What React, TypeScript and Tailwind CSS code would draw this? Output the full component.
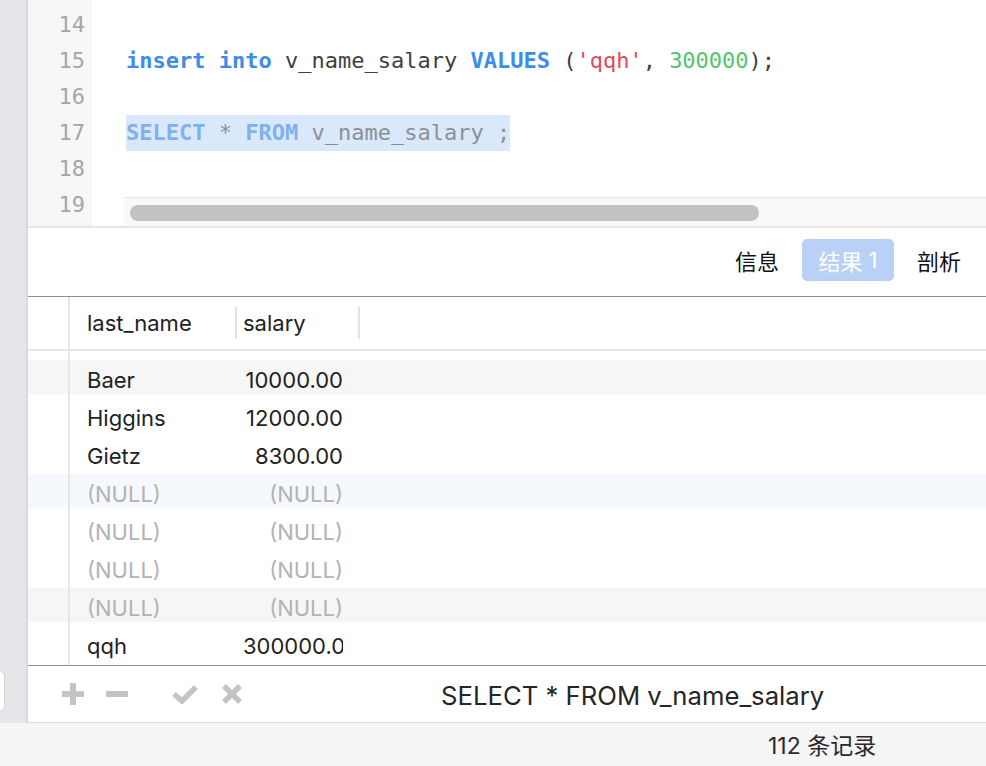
import React from "react";

const mono = { fontFamily: '"DejaVu Sans Mono", "Liberation Mono", monospace' };
const sans = { fontFamily: 'Inter, "Noto Sans CJK SC", sans-serif' };

type Row = { name: string; salary: string; nul?: boolean; band?: string; clip?: boolean };

const rows: Row[] = [
  { name: "Baer", salary: "10000.00", band: "bg-[#f6f6f6]" },
  { name: "Higgins", salary: "12000.00" },
  { name: "Gietz", salary: "8300.00" },
  { name: "(NULL)", salary: "(NULL)", nul: true, band: "bg-[#f5f8fd]" },
  { name: "(NULL)", salary: "(NULL)", nul: true },
  { name: "(NULL)", salary: "(NULL)", nul: true },
  { name: "(NULL)", salary: "(NULL)", nul: true, band: "bg-[#f6f6f6]" },
  { name: "qqh", salary: "300000.00", clip: true },
];

function CodeLine({ children, hl }: { children?: React.ReactNode; hl?: boolean }) {
  return (
    <div className="h-[36px] flex items-center">
      <span className={"whitespace-pre leading-[36px] h-[36px] " + (hl ? "bg-[#dae8fb]" : "")}>{children}</span>
    </div>
  );
}

export default function App() {
  return (
    <div className="w-[986px] h-[766px] flex flex-col bg-white overflow-hidden" style={sans}>
      <div className="flex flex-1 min-h-0">
        {/* left strip */}
        <div className="w-[28px] shrink-0 bg-[#e6e5ea] border-r-2 border-[#d9d8dd] flex flex-col">
          <div className="flex-1" />
          <div className="h-[40px] w-[5px] bg-white rounded-r-[6px] border border-l-0 border-[#d4d4d4] mb-[12px]" />
        </div>
        {/* main */}
        <div className="flex-1 flex flex-col min-w-0">
          {/* editor */}
          <div className="h-[228px] shrink-0 flex border-b-2 border-[#e6e6e6]">
            <div className="w-[64px] shrink-0 bg-[#f7f7f7] pt-[7px] pr-[7px] text-right text-[22px] text-[#a6a6a6] overflow-hidden" style={mono}>
              {[14, 15, 16, 17, 18, 19].map((n) => (
                <div key={n} className="h-[36px] leading-[36px]">{n}</div>
              ))}
            </div>
            <div className="flex-1 flex flex-col min-w-0">
              <div className="flex-1 overflow-hidden pt-[7px] pl-[34px] text-[22px] text-[#404040]" style={mono}>
                <CodeLine />
                <CodeLine>
                  <span className="text-[#3c8de9] font-bold">insert</span> <span className="text-[#3c8de9] font-bold">into</span> v_name_salary{" "}
                  <span className="text-[#3c8de9] font-bold">VALUES</span> (<span className="text-[#e24a5c]">'qqh'</span>,{" "}
                  <span className="text-[#52c36f]">300000</span>);
                </CodeLine>
                <CodeLine />
                <CodeLine hl>
                  <span className="text-[#7fb1ef] font-bold">SELECT</span>
                  <span className="text-[#8a9098]"> * </span>
                  <span className="text-[#7fb1ef] font-bold">FROM</span>
                  <span className="text-[#8a9098]"> v_name_salary ;</span>
                </CodeLine>
              </div>
              <div className="h-[29px] shrink-0 ml-[32px] bg-[#f9f9f9] border-t border-[#e6e6e6] pl-[6px] pt-[7px]">
                <div className="w-[629px] h-[16px] rounded-full bg-[#c2c2c2]" />
              </div>
            </div>
          </div>
          {/* tabs */}
          <div className="h-[69px] shrink-0 border-b border-[#8e8e8e] flex items-center justify-end pr-[25px] pb-[4px] text-[22px] text-[#111]" style={{ fontFamily: '"Noto Sans CJK SC", sans-serif' }}>
            <div className="mr-[23px]">信息</div>
            <div className="h-[42px] w-[92px] rounded-[5px] bg-[#b9d1f7] text-white flex items-center justify-center mr-[23px]">
              结果 <span className="ml-[6px]" style={sans}>1</span>
            </div>
            <div>剖析</div>
          </div>
          {/* grid */}
          <div className="flex-1 min-h-0 flex flex-col text-[22px] text-[#222]">
            <div className="h-[54px] shrink-0 flex border-b-2 border-[#e6e6e6]">
              <div className="w-[42px] shrink-0 border-r-2 border-[#e6e6e6]" />
              <div className="w-[165px] shrink-0 pl-[17px] flex items-center">last_name</div>
              <div className="w-[2px] h-[32px] self-center bg-[#e2e2e2]" />
              <div className="w-[121px] shrink-0 pl-[6px] flex items-center">salary</div>
              <div className="w-[2px] h-[32px] self-center bg-[#e2e2e2]" />
            </div>
            <div className="flex-1 flex flex-col">
              <div className="h-[9px] shrink-0 flex">
                <div className="w-[42px] shrink-0 border-r-2 border-[#e6e6e6]" />
              </div>
              {rows.map((r, i) => (
                <div key={i} className="h-[38px] shrink-0 flex flex-col">
                  <div className={"h-[34px] flex " + (r.band || "")}>
                    <div className="w-[42px] shrink-0 border-r-2 border-[#e6e6e6]" />
                    <div className={"w-[165px] shrink-0 pl-[17px] flex items-center pt-[6px] " + (r.nul ? "text-[#b3b3b3]" : "")}>{r.name}</div>
                    <div className="w-[2px]" />
                    <div
                      className={
                        "w-[100px] shrink-0 ml-[6px] overflow-hidden whitespace-nowrap flex items-center pt-[6px] " +
                        (r.clip ? "justify-start " : "justify-end ") +
                        (r.nul ? "text-[#b3b3b3]" : "")
                      }
                    >
                      {r.salary}
                    </div>
                  </div>
                  <div className="h-[4px] flex">
                    <div className="w-[42px] shrink-0 border-r-2 border-[#e6e6e6]" />
                  </div>
                </div>
              ))}
              <div className="flex-1 flex">
                <div className="w-[42px] shrink-0 border-r-2 border-[#e6e6e6]" />
              </div>
            </div>
          </div>
          {/* toolbar */}
          <div className="h-[58px] shrink-0 border-t border-[#8e8e8e] border-b border-b-[#dcdcdc] flex items-center">
            <svg width="22" height="22" viewBox="0 0 22 22" className="ml-[34px]">
              <rect x="0" y="8" width="22" height="6" fill="#c4c4c4" />
              <rect x="8" y="0" width="6" height="22" fill="#c4c4c4" />
            </svg>
            <svg width="22" height="22" viewBox="0 0 22 22" className="ml-[22px]">
              <rect x="0" y="8" width="22" height="6" fill="#c4c4c4" />
            </svg>
            <svg width="26" height="20" viewBox="0 0 26 20" className="ml-[44px]">
              <path d="M2 10 L10 17 L24 3" fill="none" stroke="#c4c4c4" strokeWidth="5.5" strokeLinecap="butt" strokeLinejoin="miter" />
            </svg>
            <svg width="20" height="20" viewBox="0 0 20 20" className="ml-[24px]">
              <path d="M2 2 L18 18 M18 2 L2 18" fill="none" stroke="#c4c4c4" strokeWidth="5.5" />
            </svg>
            <div className="ml-[199px] pt-[4px] text-[25.7px] text-[#262626] whitespace-nowrap">SELECT * FROM v_name_salary</div>
          </div>
        </div>
      </div>
      {/* status bar */}
      <div className="h-[43px] shrink-0 bg-[#f5f5f5] flex items-center pl-[768px] pt-[4px] text-[23px] text-[#2a2a2a]" style={{ fontFamily: 'Inter, "Noto Sans CJK SC", sans-serif' }}>
        112 条记录
      </div>
    </div>
  );
}
